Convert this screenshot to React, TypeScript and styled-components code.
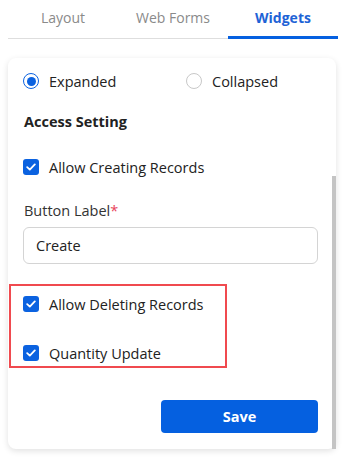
import styled, { createGlobalStyle } from 'styled-components'

const Global = createGlobalStyle`
    html, body {
        margin: 0;
        padding: 0;
        background: #ffffff;
        font-family: "Open Sans", "Noto Sans", sans-serif;
        color: #222222;
    }
    * { box-sizing: border-box; }
`

const Page = styled.div`
    width: 354px;
    height: 463px;
    padding: 0 16px 0 8px;
    overflow: hidden;
`

const Tabs = styled.div`
    display: flex;
    height: 39px;
    border-bottom: 1px solid #dedede;
`

const Tab = styled.div<{ $active?: boolean }>`
    flex: 1;
    display: flex;
    align-items: center;
    justify-content: center;
    padding-bottom: 1px;
    font-size: 14px;
    font-weight: ${p => p.$active ? 700 : 400};
    color: ${p => p.$active ? '#1e63d6' : '#8a8a8a'};
    border-bottom: 3px solid ${p => p.$active ? '#0560e0' : 'transparent'};
    margin-bottom: -1px;
`

const Card = styled.div`
    position: relative;
    margin: 19px 2px 0 0;
    height: 391px;
    border-radius: 8px;
    background: #ffffff;
    box-shadow: 0 2px 6px rgba(0, 0, 0, 0.12);
    padding: 0 18px 0 15px;
    font-size: 14.5px;
`

const Thumb = styled.div`
    position: absolute;
    right: 0;
    top: 118px;
    bottom: 0;
    width: 4px;
    background: #c4c4c4;
`

const RadioRow = styled.div`
    display: flex;
    height: 46px;
    padding-top: 15px;
`

const RadioOption = styled.label`
    display: flex;
    align-items: center;
    gap: 10px;
    width: 163px;
    flex-shrink: 0;
    height: 16px;
`

const Radio = styled.span<{ $on?: boolean }>`
    width: 16px;
    height: 16px;
    border-radius: 50%;
    border: ${p => p.$on ? '1.5px solid #0b62e0' : '1px solid #c8c8c8'};
    display: flex;
    align-items: center;
    justify-content: center;
    &::after {
        content: '';
        width: 9px;
        height: 9px;
        border-radius: 50%;
        background: ${p => p.$on ? '#0b62e0' : 'transparent'};
    }
`

const SectionTitle = styled.div`
    font-weight: 700;
    margin: 8px 0 0 1px;
    line-height: 20px;
`

const CheckRow = styled.label<{ $mt: number }>`
    display: flex;
    align-items: center;
    gap: 10px;
    height: 20px;
    margin-top: ${p => p.$mt}px;
`

const Box = styled.span`
    width: 16px;
    height: 16px;
    border-radius: 3px;
    background: #0b62e0;
    display: flex;
    align-items: center;
    justify-content: center;
`

const FieldLabel = styled.div`
    margin: 24px 0 0 1px;
    line-height: 20px;
    color: #333333;
    span { color: #e8435a; }
`

const Input = styled.div`
    margin-top: 6px;
    height: 37px;
    border: 1px solid #d4d4d4;
    border-radius: 6px;
    display: flex;
    align-items: center;
    padding-left: 12px;
    color: #222222;
`

const Highlight = styled.div`
    margin: 20px 0 0 -14px;
    width: 218px;
    height: 84px;
    border: 2px solid #f04a4f;
    padding: 8px 0 0 12px;
`

const Footer = styled.div`
    display: flex;
    justify-content: flex-end;
    margin-top: 32px;
`

const SaveButton = styled.button`
    width: 157px;
    height: 33px;
    border: none;
    border-radius: 4px;
    background: #0560e0;
    color: #ffffff;
    font-family: inherit;
    font-size: 14.5px;
    font-weight: 700;
`

const Check = () => (
    <svg width="10" height="8" viewBox="0 0 10 8" fill="none">
        <path d="M1.2 4.2 L3.8 6.6 L8.8 1.4" stroke="#ffffff" strokeWidth="1.8" strokeLinecap="round" strokeLinejoin="round" />
    </svg>
)

export default function App() {
    return <Page>
        <Global />
        <Tabs>
            <Tab>Layout</Tab>
            <Tab>Web Forms</Tab>
            <Tab $active>Widgets</Tab>
        </Tabs>
        <Card>
            <RadioRow>
                <RadioOption><Radio $on />Expanded</RadioOption>
                <RadioOption><Radio />Collapsed</RadioOption>
            </RadioRow>
            <SectionTitle>Access Setting</SectionTitle>
            <CheckRow $mt={25}><Box><Check /></Box>Allow Creating Records</CheckRow>
            <FieldLabel>Button Label<span>*</span></FieldLabel>
            <Input>Create</Input>
            <Highlight>
                <CheckRow $mt={0}><Box><Check /></Box>Allow Deleting Records</CheckRow>
                <CheckRow $mt={29}><Box><Check /></Box>Quantity Update</CheckRow>
            </Highlight>
            <Footer><SaveButton>Save</SaveButton></Footer>
            <Thumb />
        </Card>
    </Page>
}
